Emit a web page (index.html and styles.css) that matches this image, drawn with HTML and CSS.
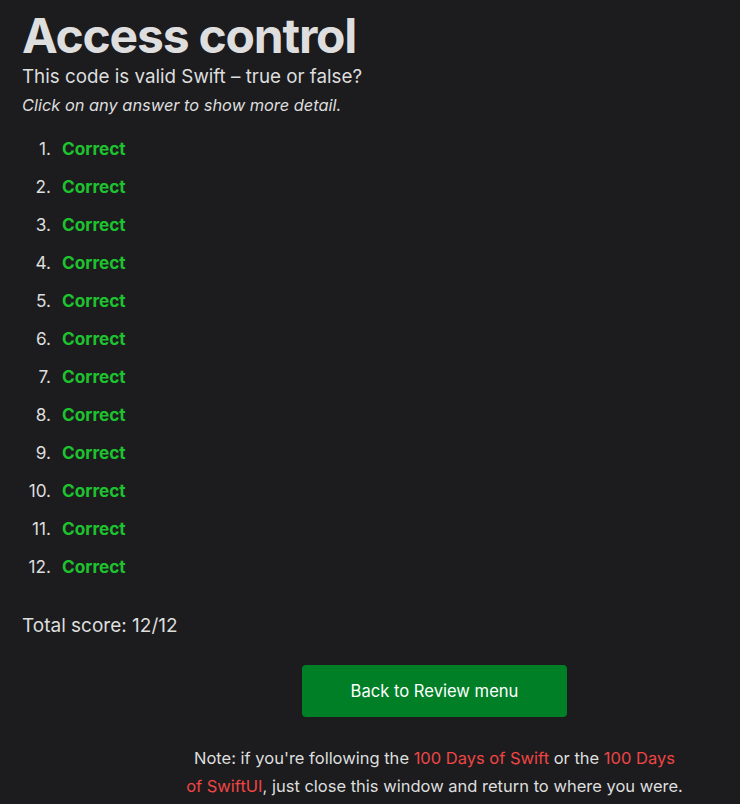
FILE: index.html
```html
<!DOCTYPE html>
<html>
<head>
<meta charset="utf-8">
<link rel="stylesheet" href="styles.css">
</head>
<body>
<main class="page">
  <h1 class="title">Access control</h1>
  <p class="subtitle">This code is valid Swift – true or false?</p>
  <p class="hint">Click on any answer to show more detail.</p>
  <ol class="answers">
    <li><span class="num">1.</span><span class="correct">Correct</span></li>
    <li><span class="num">2.</span><span class="correct">Correct</span></li>
    <li><span class="num">3.</span><span class="correct">Correct</span></li>
    <li><span class="num">4.</span><span class="correct">Correct</span></li>
    <li><span class="num">5.</span><span class="correct">Correct</span></li>
    <li><span class="num">6.</span><span class="correct">Correct</span></li>
    <li><span class="num">7.</span><span class="correct">Correct</span></li>
    <li><span class="num">8.</span><span class="correct">Correct</span></li>
    <li><span class="num">9.</span><span class="correct">Correct</span></li>
    <li><span class="num">10.</span><span class="correct">Correct</span></li>
    <li><span class="num">11.</span><span class="correct">Correct</span></li>
    <li><span class="num">12.</span><span class="correct">Correct</span></li>
  </ol>
  <p class="score">Total score: 12/12</p>
  <div class="footer">
    <a class="button" href="#">Back to Review menu</a>
    <p class="note">Note: if you're following the <a href="#">100 Days of Swift</a> or the <a href="#">100 Days of SwiftUI</a>, just close this window and return to where you were.</p>
  </div>
</main>
</body>
</html>
```

FILE: styles.css
```css
html, body {
  margin: 0;
  padding: 0;
  background: #1c1c1e;
}
body {
  font-family: Inter, "Noto Sans", sans-serif;
  color: #dedede;
}
.page {
  padding: 0 22px;
}
.title {
  margin: 0;
  padding-top: 7px;
  font-size: 48px;
  font-weight: 700;
  line-height: 58px;
  letter-spacing: -1.2px;
}
.subtitle {
  margin: 0;
  font-size: 18.8px;
  line-height: 24px;
}
.hint {
  margin: 4px 0 0;
  font-size: 16.4px;
  font-style: italic;
  line-height: 24px;
}
.answers {
  margin: 21px 0 0;
  padding: 0;
  list-style: none;
  display: flex;
  flex-direction: column;
  gap: 16px;
  font-size: 17.2px;
  line-height: 22px;
}
.answers li {
  display: grid;
  grid-template-columns: 29px auto;
  column-gap: 11px;
  justify-content: start;
}
.num {
  text-align: right;
}
.correct {
  color: #1ec22e;
  font-weight: 700;
}
.score {
  margin: 36px 0 0;
  font-size: 19px;
  line-height: 24px;
}
.footer {
  width: 498px;
  margin: 27px 0 0 163.5px;
  display: flex;
  flex-direction: column;
  align-items: center;
}
.button {
  display: flex;
  align-items: center;
  justify-content: center;
  width: 265px;
  height: 52px;
  border-radius: 4px;
  background: #007f27;
  color: #ffffff;
  font-size: 16.6px;
  text-decoration: none;
}
.note {
  margin: 27px 0 0;
  text-align: center;
  font-size: 16.5px;
  line-height: 28px;
}
.note a {
  color: #ef4545;
  text-decoration: none;
}
```
